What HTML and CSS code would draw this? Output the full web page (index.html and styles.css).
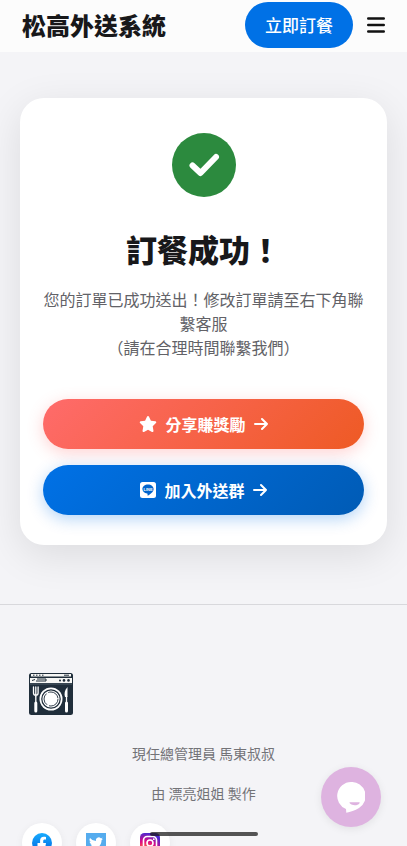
FILE: index.html
```html
<!DOCTYPE html>
<html lang="zh-Hant">
<head>
<meta charset="utf-8">
<meta name="viewport" content="width=device-width, initial-scale=1">
<title>松高外送系統</title>
<link rel="stylesheet" href="styles.css">
</head>
<body>
<header class="topbar">
  <a class="brand" href="#">松高外送系統</a>
  <div class="topbar-actions">
    <a class="order-link" href="#">立即訂餐</a>
    <button class="menu-button" type="button" aria-label="選單">
      <svg width="18" height="16" viewBox="0 0 18 16" stroke="#111" stroke-width="2.400" stroke-linecap="round"><path d="M1.200 1.500h15.600M1.200 8h15.600M1.200 14.500h15.600"/></svg>
    </button>
  </div>
</header>

<main class="content">
  <section class="card">
    <div class="success-mark">
      <svg width="32" height="26" viewBox="0 0 32 26" fill="none" stroke="#fff" stroke-width="6" stroke-linecap="round" stroke-linejoin="round"><path d="M4.500 13.500L12.500 21L28 5"/></svg>
    </div>
    <h1 class="title">訂餐成功！</h1>
    <p class="message">您的訂單已成功送出！修改訂單請至右下角聯繫客服<br>（請在合理時間聯繫我們）</p>
    <div class="actions">
      <a class="action action-share" href="#">
        <svg width="18" height="16" viewBox="0 0 576 512" fill="#fff"><path d="M316.900 18C311.600 7 300.400 0 288.100 0s-23.400 7-28.800 18L195 150.300 51.400 171.500c-12 1.800-22 10.200-25.700 21.700s-.7 24.200 7.900 32.700L137.800 329 113.200 474.700c-2 12 3 24.200 12.900 31.300s23 8 33.800 2.300l128.300-68.500 128.300 68.500c10.800 5.700 23.900 4.900 33.800-2.300s14.900-19.300 12.900-31.300L438.500 329 542.700 225.900c8.600-8.500 11.700-21.200 7.900-32.700s-13.700-19.900-25.700-21.700L381.200 150.300 316.900 18z"/></svg>
        <span>分享賺獎勵</span>
        <svg width="14" height="14" viewBox="0 0 14 14" fill="none" stroke="#fff" stroke-width="2" stroke-linecap="round" stroke-linejoin="round"><path d="M1 7h12M8 2l5 5-5 5"/></svg>
      </a>
      <a class="action action-group" href="#">
        <svg width="16" height="16" viewBox="0 0 16 16"><rect width="16" height="16" rx="2.500" fill="#fff"/><path d="M8 2.600c-3.100 0-5.600 2-5.600 4.500 0 2.200 2 4.100 4.700 4.500.7.100.5.600.4 1.600 0 .5.300.5.800.2 1.400-.8 5.300-3.200 5.300-6.300C13.600 4.600 11.100 2.600 8 2.600z" fill="#0064cd"/><text x="8" y="8.500" text-anchor="middle" class="line-mark">LINE</text></svg>
        <span>加入外送群</span>
        <svg width="14" height="14" viewBox="0 0 14 14" fill="none" stroke="#fff" stroke-width="2" stroke-linecap="round" stroke-linejoin="round"><path d="M1 7h12M8 2l5 5-5 5"/></svg>
      </a>
    </div>
  </section>
</main>

<footer class="footer">
  <a class="footer-logo" href="#" aria-label="首頁">
    <svg width="46" height="44" viewBox="0 0 46 44">
      <rect x="1" y="1" width="44" height="42" rx="2.500" fill="#202e3b"/>
      <path d="M3 2h40v2.500H3zM2 6h42v5H2z" fill="#f7f7f5"/>
      <path d="M5 3.200h11" stroke="#202e3b" stroke-width="1" stroke-dasharray="1.500 1.500"/>
      <path d="M36 3.200h5" stroke="#202e3b" stroke-width="1"/>
      <path d="M4 8.500l3-1M9 7h9v2H8" fill="none" stroke="#202e3b" stroke-width="1"/>
      <g fill="#202e3b"><circle cx="32" cy="8.400" r="1"/><circle cx="36" cy="8.400" r="1.300"/><circle cx="40.500" cy="8.400" r="1.300"/></g>
      <path d="M2 12h42" stroke="#65717b" stroke-width=".7"/>
      <circle cx="23" cy="27" r="11.500" fill="#fff"/>
      <circle cx="23" cy="27" r="9.200" fill="none" stroke="#202e3b" stroke-width="1.200"/>
      <circle cx="23" cy="27" r="7" fill="none" stroke="#202e3b" stroke-width=".9" stroke-dasharray="13 2"/>
      <path d="M5.500 15v6c0 3 4.600 3 4.600 0v-6M7.800 15v9" fill="none" stroke="#fff" stroke-width="1.300" stroke-linecap="round"/>
      <path d="M7.800 24v7" stroke="#fff" stroke-width="1.300"/>
      <path d="M7.800 31v8" stroke="#fff" stroke-width="3" stroke-linecap="round"/>
      <path d="M39.500 15c-3 3-3.500 7-2.500 10h2.500z" fill="#fff"/>
      <path d="M38.500 24v7" stroke="#fff" stroke-width="1.300"/>
      <path d="M38.500 31v8" stroke="#fff" stroke-width="3" stroke-linecap="round"/>
    </svg>
  </a>
  <p class="credit">現任總管理員 馬東叔叔</p>
  <p class="credit">由 漂亮姐姐 製作</p>
  <nav class="social" aria-label="社群">
    <a href="#" aria-label="Facebook">
      <svg width="20" height="20" viewBox="0 0 20 20"><defs><linearGradient id="fb" x2="0" y2="1"><stop stop-color="#18acfe"/><stop offset="1" stop-color="#0163e0"/></linearGradient></defs><circle cx="10" cy="10" r="10" fill="url(#fb)"/><path d="M13.500 12.900l.5-2.900h-2.800V8.100c0-.9.400-1.500 1.600-1.500H14V4c-.6-.1-1.400-.2-2.200-.2-2.400 0-3.700 1.400-3.700 3.900V10H5.500v2.900h2.600V20h3.100v-7.100z" fill="#fff"/></svg>
    </a>
    <a href="#" aria-label="Twitter">
      <svg width="20" height="20" viewBox="0 0 20 20"><path fill="#55acee" d="M0 0h20v20H0z"/><path d="M17 5.700c-.5.200-1 .4-1.600.4.600-.3 1-.9 1.200-1.500-.6.300-1.200.6-1.800.7A2.900 2.900 0 0 0 9.900 8 8.200 8.200 0 0 1 4 4.900a2.900 2.900 0 0 0 .9 3.900c-.5 0-.9-.2-1.300-.4 0 1.400 1 2.600 2.300 2.900-.4.100-.8.100-1.300 0 .4 1.200 1.400 2 2.700 2A5.800 5.800 0 0 1 3 14.500c4.900 3.100 12.500.2 12.600-7.400.5-.4 1-.9 1.400-1.400z" fill="#fff"/></svg>
    </a>
    <a href="#" aria-label="Instagram">
      <svg width="20" height="20" viewBox="0 0 20 20"><defs><radialGradient id="ig" cx=".25" cy="1.050" r="1.050"><stop stop-color="#ffdc55"/><stop offset=".3" stop-color="#ff643f"/><stop offset=".62" stop-color="#dc0b86"/><stop offset="1" stop-color="#4b28d0"/></radialGradient></defs><rect width="20" height="20" rx="4.500" fill="url(#ig)"/><g fill="none" stroke="#fff" stroke-width="1.600"><rect x="3.500" y="3.500" width="13" height="13" rx="3.700"/><circle cx="10" cy="10" r="3"/></g><circle cx="13.800" cy="6.200" r=".9" fill="#fff"/></svg>
    </a>
  </nav>
</footer>

<button class="chat" type="button" aria-label="聯繫客服">
  <svg width="28" height="31" viewBox="0 0 28 31"><path d="M14 0a14 14 0 0 0-5 27l.3 3.800c4-1.100 8.700-2.300 12.700-4.900A14 14 0 0 0 14 0z" fill="#fff"/><path d="M13 20.300h9c.7 0 .8.500.5 1-1.800 2.700-7.200 2.600-9.500.3-.7-.7-.6-1.300 0-1.300z" fill="#deb3e0"/></svg>
</button>
<div class="home-indicator"></div>
</body>
</html>
```
FILE: styles.css
```css
* {
  box-sizing: border-box;
}

html {
  scrollbar-width: none;
}

body {
  margin: 0;
  background: #f4f4f7;
  color: #18181a;
  font-family: "Noto Sans CJK TC", sans-serif;
  font-size: 16px;
  line-height: 24px;
}

a {
  color: inherit;
  text-decoration: none;
}

svg {
  display: block;
  flex: none;
}

.topbar {
  position: sticky;
  top: 0;
  z-index: 2;
  display: flex;
  align-items: center;
  justify-content: space-between;
  padding: 2px 22px 4px;
  background: #fcfcfc;
}

.brand {
  font-size: 24px;
  font-weight: 900;
}

.topbar-actions {
  display: flex;
  align-items: center;
  gap: 14px;
}

.order-link {
  padding: 11px 20px;
  border-radius: 24px;
  background: #0071e6;
  color: #fff;
  font-size: 17px;
  font-weight: 500;
}

.menu-button {
  padding: 0;
  border: 0;
  background: none;
}

.content {
  padding: 46px 20px 59px;
}

.card {
  display: flex;
  flex-direction: column;
  align-items: center;
  padding: 35px 23px 30px;
  border-radius: 24px;
  background: #fff;
  box-shadow: 0 10px 40px rgba(0, 0, 0, 0.1);
  text-align: center;
}

.success-mark {
  display: grid;
  place-items: center;
  width: 64px;
  height: 64px;
  border-radius: 50%;
  background: #2c8a3e;
}

.title {
  margin: 32px 0 18px;
  font-size: 31px;
  font-weight: 900;
  line-height: 40px;
}

.message {
  margin: 0 0 40px;
  color: #626267;
}

.actions {
  display: grid;
  gap: 16px;
  align-self: stretch;
}

.action {
  display: flex;
  align-items: center;
  justify-content: center;
  gap: 8px;
  padding: 13px 24px;
  border-radius: 25px;
  color: #fff;
  font-weight: 700;
}

.action-share {
  background: linear-gradient(135deg, #ff6b6b, #ee5a24);
  box-shadow: 0 4px 16px rgba(255, 107, 107, 0.3);
}

.action-group {
  background: linear-gradient(135deg, #0071e6, #005bb5);
  box-shadow: 0 4px 16px rgba(0, 113, 230, 0.3);
}

.line-mark {
  fill: #fff;
  font-family: "Liberation Sans", sans-serif;
  font-size: 4px;
  font-weight: 700;
}

.footer {
  padding: 67px 22px 40px;
  border-top: 1px solid #d8d8dc;
}

.footer-logo {
  display: block;
  width: 46px;
  margin: 0 6px 25px;
}

.credit {
  margin: 0 0 16px;
  color: #737377;
  font-size: 14px;
  text-align: center;
}

.social {
  display: flex;
  gap: 14px;
  padding-top: 2px;
}

.social a {
  display: grid;
  place-items: center;
  width: 40px;
  height: 40px;
  border-radius: 50%;
  background: #fff;
  box-shadow: 0 2px 8px rgba(0, 0, 0, 0.06);
}

.chat {
  position: fixed;
  right: 26px;
  bottom: 19px;
  display: grid;
  place-items: center;
  width: 60px;
  height: 60px;
  padding: 0;
  border: 0;
  border-radius: 50%;
  background: #deb3e0;
  box-shadow: 0 2px 8px rgba(0, 0, 0, 0.08);
}

.home-indicator {
  position: fixed;
  bottom: 10px;
  left: 50%;
  width: 108px;
  height: 4px;
  margin-left: -54px;
  border-radius: 2px;
  background: rgba(30, 30, 30, 0.75);
}
```
